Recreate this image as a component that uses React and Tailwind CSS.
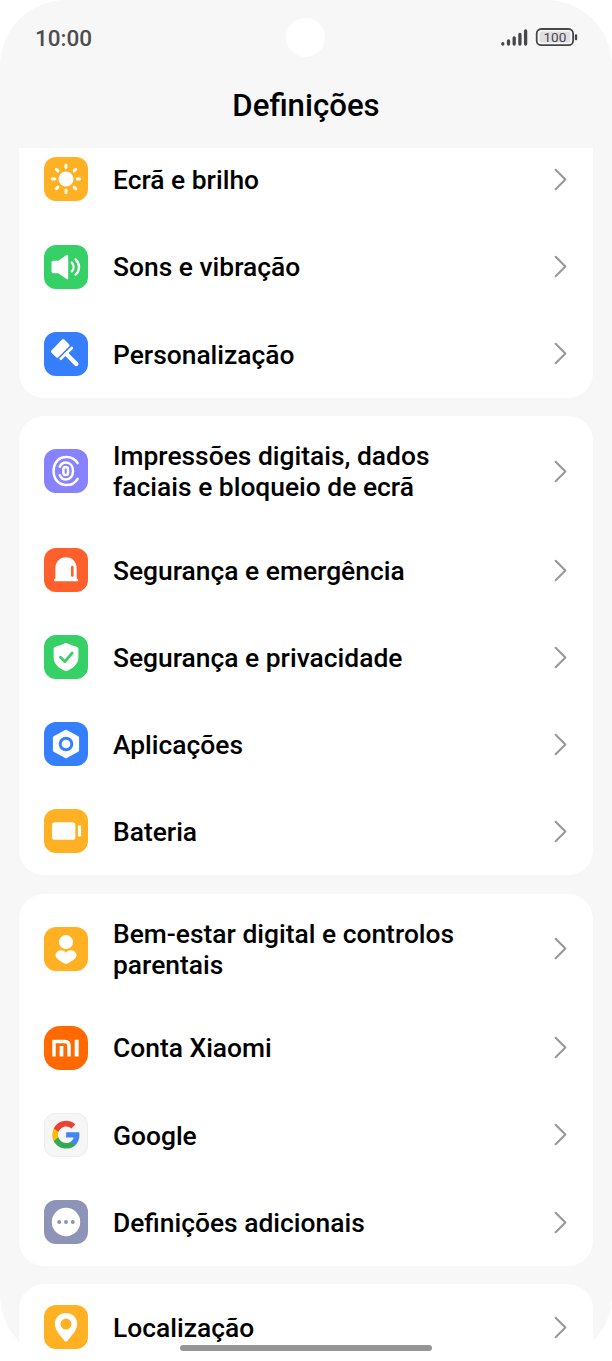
import { ChevronRight } from 'lucide-react'

function SunIcon() {
  return (
    <g>
      <circle cx="22" cy="22" r="7.5" fill="#fff" />
      <g stroke="#fff" strokeWidth="2.9" strokeLinecap="round">
        <path d="M22 8.200v2.600M22 33.200v2.600M8.200 22h2.600M33.200 22h2.600M12.200 12.200l1.700 1.700M30.100 30.100l1.700 1.700M12.200 31.800l1.700-1.700M30.100 13.900l1.700-1.700" />
      </g>
    </g>
  )
}

function SoundIcon() {
  return (
    <g>
      <path
        d="M9.500 15.800h4.800l8.200-5.800c.8-.5 1.700-.1 1.700.8v22.400c0 .9-.9 1.300-1.700.8l-8.200-5.800H9.500c-1.200 0-2-.8-2-2v-8.400c0-1.200.8-2 2-2z"
        fill="#fff"
      />
      <path
        d="M27.800 17.600c2.300 2.500 2.300 6.300 0 8.800M31.600 14.300c4.600 4.400 4.600 11 0 15.400"
        fill="none"
        stroke="#fff"
        strokeWidth="2.300"
        strokeLinecap="round"
      />
    </g>
  )
}

function BrushIcon() {
  return (
    <g stroke="#fff" strokeLinecap="round" strokeLinejoin="round">
      <path d="M19.200 8.600 23.900 13.300 13.200 24 8.600 19.600z" fill="#fff" strokeWidth="3.200" />
      <path d="M16.800 26.800 27.800 16" strokeWidth="2.700" />
      <path d="M22.600 22.200 32.300 32" strokeWidth="4.400" />
    </g>
  )
}

function FingerprintIcon() {
  return (
    <g fill="none" stroke="#fff" strokeWidth="2.500" strokeLinecap="round">
      <path d="M33.600 14.200C31.300 10.200 27.300 8 22.400 8 14.900 8 9.600 13.400 9.600 22s5.300 14 12.800 14c4.900 0 8.900-2.200 11.200-6.200" />
      <path d="M15.800 17.800c1.200-2.800 3.300-4.300 6-4.300 4.200 0 7.200 3.400 7.200 8.500s-3 8.500-7.200 8.500c-2.700 0-4.800-1.500-6-4.300" />
      <rect x="19.400" y="18" width="4.600" height="8" rx="2.300" />
    </g>
  )
}

function AlarmIcon() {
  return (
    <g>
      <path
        d="M11.400 30.800V20.400C11.400 13.900 15.900 9.300 22 9.300s10.700 4.600 10.700 11.100v10.400h.2a1.200 1.200 0 0 1 0 2.400H11.200a1.200 1.200 0 0 1 0-2.400z"
        fill="#fff"
      />
      <path d="M28.300 19.100v8.400" stroke="#ff5f2b" strokeWidth="2.600" strokeLinecap="round" />
    </g>
  )
}

function ShieldIcon() {
  return (
    <g>
      <path
        d="M20.800 8.300c.8-.4 1.600-.4 2.400 0 3 1.500 6 2.600 9.300 3.400 1.200.3 1.900 1.100 1.900 2.300v8.200c0 6-4.200 10.400-11 13.600-.9.4-1.700.4-2.600 0-7-3.200-11.200-7.600-11.200-13.600V14c0-1.200.7-2 1.900-2.300 3.300-.8 6.300-1.900 9.300-3.400z"
        fill="#fff"
      />
      <path
        d="m16.400 22.200 4.400 4.400 7.400-8.600"
        fill="none"
        stroke="#35d167"
        strokeWidth="2.800"
        strokeLinecap="round"
        strokeLinejoin="round"
      />
    </g>
  )
}

function AppsIcon() {
  return (
    <g>
      <path
        d="M22 9.300 33.600 15.600v12.800L22 34.700 10.400 28.400V15.600z"
        fill="#fff"
        stroke="#fff"
        strokeWidth="3"
        strokeLinejoin="round"
      />
      <circle cx="22" cy="22" r="5.800" fill="none" stroke="#357fff" strokeWidth="2.900" />
    </g>
  )
}

function BatteryIcon() {
  return (
    <g fill="#fff">
      <rect x="8.100" y="13.200" width="23.200" height="17.600" rx="2.600" />
      <rect x="33.900" y="16.600" width="3.200" height="11" rx="1" />
    </g>
  )
}

function WellbeingIcon() {
  return (
    <g fill="#fff">
      <circle cx="22" cy="15.100" r="7" />
      <path d="M22 25.700c2.300-2.700 6.200-3 8.600-1.200 2.400 1.800 2.500 4.800.3 6.900-2.100 2-4.800 3.600-7.500 5-1 .5-1.800.5-2.800 0-2.700-1.400-5.400-3-7.500-5-2.200-2.100-2.100-5.100.3-6.900 2.400-1.800 6.300-1.500 8.600 1.200z" />
    </g>
  )
}

function MiIcon() {
  return (
    <g fill="none" stroke="#fff" strokeWidth="3.500">
      <path d="M10 30.600V15.400h10.600c2.900 0 4.400 1.500 4.400 4.400v10.800" />
      <path d="M17.500 20v10.600" strokeWidth="3.700" />
      <path d="M32.700 13.700v16.900" strokeWidth="4" />
    </g>
  )
}

function GoogleIcon() {
  return (
    <g transform="translate(7 6.600) scale(1.260)">
      <path
        d="M22.560 12.250c0-.78-.07-1.530-.2-2.250H12v4.260h5.920c-.26 1.370-1.040 2.530-2.210 3.310v2.770h3.570c2.080-1.920 3.280-4.740 3.280-8.090z"
        fill="#4285f4"
      />
      <path
        d="M12 23c2.970 0 5.460-.98 7.280-2.660l-3.570-2.770c-.98.66-2.230 1.060-3.710 1.060-2.860 0-5.290-1.930-6.160-4.530H2.180v2.840C3.990 20.530 7.700 23 12 23z"
        fill="#34a853"
      />
      <path
        d="M5.840 14.090c-.22-.66-.35-1.360-.35-2.090s.13-1.430.35-2.090V7.070H2.180C1.430 8.550 1 10.220 1 12s.43 3.450 1.180 4.930l3.660-2.840z"
        fill="#fbbc05"
      />
      <path
        d="M12 5.380c1.620 0 3.060.56 4.210 1.640l3.150-3.150C17.450 2.090 14.970 1 12 1 7.700 1 3.990 3.470 2.180 7.070l3.660 2.840c.87-2.600 3.300-4.530 6.160-4.530z"
        fill="#ea4335"
      />
    </g>
  )
}

function MoreIcon() {
  return (
    <g>
      <circle cx="22" cy="22" r="14.200" fill="#fff" />
      <g fill="#8e94b7">
        <circle cx="15.200" cy="22" r="2" />
        <circle cx="22" cy="22" r="2" />
        <circle cx="28.800" cy="22" r="2" />
      </g>
    </g>
  )
}

function PinIcon() {
  return (
    <path
      fillRule="evenodd"
      d="M22 7.900c6.300 0 11.200 4.700 11.200 10.900 0 5.600-5 11.700-9.900 17.100-.8.900-1.800.9-2.600 0-4.900-5.400-9.900-11.500-9.900-17.100C10.800 12.600 15.700 7.900 22 7.900zm0 5.700a5.500 5.500 0 1 0 0 11 5.500 5.500 0 0 0 0-11z"
      fill="#fff"
    />
  )
}

const groups = [
  [
    { label: 'Ecrã e brilho', color: 'bg-[#ffb123]', icon: SunIcon },
    { label: 'Sons e vibração', color: 'bg-[#35d167]', icon: SoundIcon },
    { label: 'Personalização', color: 'bg-[#357fff]', icon: BrushIcon },
  ],
  [
    { label: 'Impressões digitais, dados faciais e bloqueio de ecrã', color: 'bg-[#8782ff]', icon: FingerprintIcon, tall: true },
    { label: 'Segurança e emergência', color: 'bg-[#ff5f2b]', icon: AlarmIcon },
    { label: 'Segurança e privacidade', color: 'bg-[#35d167]', icon: ShieldIcon },
    { label: 'Aplicações', color: 'bg-[#357fff]', icon: AppsIcon },
    { label: 'Bateria', color: 'bg-[#ffb123]', icon: BatteryIcon },
  ],
  [
    { label: 'Bem-estar digital e controlos parentais', color: 'bg-[#ffb123]', icon: WellbeingIcon, tall: true },
    { label: 'Conta Xiaomi', color: 'bg-[#ff6900]', icon: MiIcon, round: true },
    { label: 'Google', color: 'bg-[#f6f6f6]', icon: GoogleIcon, outlined: true },
    { label: 'Definições adicionais', color: 'bg-[#8e94b7]', icon: MoreIcon },
  ],
  [{ label: 'Localização', color: 'bg-[#ffb123]', icon: PinIcon }],
]

function Row({ item }) {
  const Icon = item.icon
  return (
    <div className={`flex items-center pl-[25px] pr-[19px] ${item.tall ? 'h-[110.6px]' : 'h-[87.2px]'}`}>
      <div
        className={`mb-[0.3px] size-11 shrink-0 overflow-hidden ${item.round ? 'rounded-[16px]' : 'rounded-[12px]'} ${item.outlined ? 'inset-ring inset-ring-[#eeeeee]' : ''} ${item.color}`}
      >
        <svg viewBox="0 0 44 44" className="size-full">
          <Icon />
        </svg>
      </div>
      <span className="ml-[25px] w-[360px] pt-[2.4px] text-[26.400px] leading-[31px] font-medium text-black">{item.label}</span>
      <ChevronRight className="-mr-[6px] ml-auto size-[39px] shrink-0 text-[#999999]" strokeWidth={1.3} />
    </div>
  )
}

function StatusBar() {
  return (
    <div className="flex h-[74px] items-center justify-between pl-[35px] pr-[34px]">
      <span className="w-[76px] pt-[3px] text-[22.500px] font-medium text-[#4d4d50]">10:00</span>
      <div className="size-[39px] rounded-full bg-white" />
      <svg width="78" height="20" viewBox="0 0 78 20">
        <g stroke="#47474a" strokeWidth="3.300" strokeLinecap="round">
          <path d="M2.800 16.700v.4M8.500 13.800v3.300M14.200 10.800v6.300M19.900 7.500v9.600M25.600 4v13.100" />
        </g>
        <rect x="36.700" y="2" width="36.400" height="16.200" rx="4.500" fill="none" stroke="#47474a" strokeWidth="1.800" />
        <rect x="39.500" y="4.600" width="30.800" height="11" rx="2.500" fill="#dfdfe3" />
        <path d="M76 8.300v3.900" stroke="#47474a" strokeWidth="2.300" strokeLinecap="round" />
        <text x="54.900" y="15" textAnchor="middle" fontSize="13.600" fill="#47474a">
          100
        </text>
      </svg>
    </div>
  )
}

export default function App() {
  return (
    <div className="h-[1361px] w-[612px] bg-white font-['Roboto',sans-serif]">
      <div className="relative flex h-full flex-col overflow-hidden rounded-[66px] bg-[#f7f7f7]">
        <header className="h-[148px] shrink-0">
          <StatusBar />
          <h1 className="text-center text-[31.200px] leading-[64px] font-medium text-black">Definições</h1>
        </header>

        <main className="flex-1 overflow-hidden px-[19px]">
          <div className="-mt-3 flex flex-col gap-[18.300px]">
            {groups.map((items, i) => (
              <section key={i} className="rounded-[25px] bg-white first:rounded-t-none">
                {items.map((item) => (
                  <Row key={item.label} item={item} />
                ))}
              </section>
            ))}
          </div>
        </main>

        {/* Gesture bar */}
        <div className="absolute bottom-[10px] left-[180px] h-[6px] w-[252px] rounded-full bg-[#969696]" />
      </div>
    </div>
  )
}
